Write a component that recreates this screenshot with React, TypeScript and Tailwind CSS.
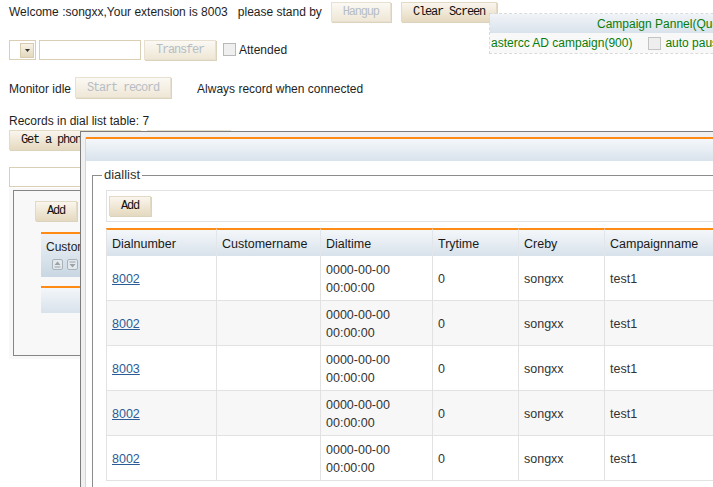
import clsx from 'clsx';
import type { ReactNode } from 'react';

interface BtnProps {
  children: ReactNode;
  disabled?: boolean;
  className?: string;
}

function Btn({ children, disabled, className }: BtnProps) {
  return (
    <button
      type="button"
      className={clsx(
        "h-[20px] shrink-0 whitespace-nowrap border px-[11px] font-['Liberation_Mono',monospace] text-[12px] leading-none tracking-[-1.2px] shadow-[1px_1px_0_#ddd3bc]",
        disabled
          ? 'border-[#e8e1d2] bg-linear-to-b from-[#fbf9f4] to-[#efe7d6] text-[#b5bdc6]'
          : 'border-[#e3dac6] bg-linear-to-b from-[#faf6ee] to-[#e6dac0] text-[#111]',
        className,
      )}
    >
      {children}
    </button>
  );
}

function SortIcon({ down }: { down?: boolean }) {
  return (
    <svg width="11" height="11" viewBox="0 0 11 11" aria-hidden="true">
      <rect x="0.5" y="0.5" width="10" height="10" rx="1.5" fill="#e4e9ee" stroke="#a9b1b9" />
      {down ? (
        <>
          <rect x="2.5" y="2.5" width="6" height="1" fill="#9aa2aa" />
          <path d="M2.5 5h6l-3 3.5z" fill="#9aa2aa" />
        </>
      ) : (
        <>
          <path d="M2.5 6h6l-3-3.5z" fill="#9aa2aa" />
          <rect x="2.5" y="7.5" width="6" height="1" fill="#9aa2aa" />
        </>
      )}
    </svg>
  );
}

const rows = [
  { num: '8002', by: 'songxx', camp: 'test1' },
  { num: '8002', by: 'songxx', camp: 'test1' },
  { num: '8003', by: 'songxx', camp: 'test1' },
  { num: '8002', by: 'songxx', camp: 'test1' },
  { num: '8002', by: 'songxx', camp: 'test1' },
];

const headers = ['Dialnumber', 'Customername', 'Dialtime', 'Trytime', 'Creby', 'Campaignname'];
const colWidths = ['w-[111px]', 'w-[104px]', 'w-[112px]', 'w-[86px]', 'w-[86px]', 'w-[221px]'];

function DialDialog() {
  return (
    <div className="absolute left-[80px] top-[131px] h-[420px] w-[760px] border-l border-t border-[#7d7d7d] bg-[#f0f0f0] pl-[4px] pt-[5px]">
      <div className="h-full border-l border-[#d6d6d6] bg-white">
        <div className="h-[24px] border-t-2 border-[#ff8a14] bg-linear-to-b from-[#f4f7fa] to-[#d9e3ec]" />
        <fieldset className="ml-[6px] mt-[6px] w-[700px] border border-[#8c8c8c] pb-[20px] pl-[13px] pt-[7px]">
          <legend className="-ml-[4px] px-[2px] text-[13px] leading-[16px] text-[#333]">diallist</legend>
          <div className="h-[32px] border border-[#e2e2e2] pl-[2px] pt-[5px]">
            <Btn>Add</Btn>
          </div>
          <table className="mt-[6px] w-[720px] table-fixed border-separate border-spacing-0 text-[12.5px] text-[#333]">
            <colgroup>
              {colWidths.map((w, i) => (
                <col key={i} className={w} />
              ))}
            </colgroup>
            <thead>
              <tr>
                {headers.map((h, i) => (
                  <th
                    key={h}
                    className={clsx(
                      'h-[28px] border-r border-t-2 border-r-[#e2e6ea] border-t-[#ff8a14] bg-linear-to-b from-[#f4f7fa] to-[#d8e2eb] pl-[5px] pt-[3px] text-left font-normal text-[#1a1a1a]',
                      i === 0 && 'border-l border-l-[#e2e2e2]',
                    )}
                  >
                    {h}
                  </th>
                ))}
              </tr>
            </thead>
            <tbody>
              {rows.map((r, i) => (
                <tr key={i} className={i % 2 === 1 ? 'bg-[#f7f7f7]' : 'bg-white'}>
                  <td className="h-[45px] border-b border-l border-r border-[#e2e2e2] pl-[5px] pt-[3px]">
                    <a href="#" className="text-[#2b5c96] underline">
                      {r.num}
                    </a>
                  </td>
                  <td className="border-b border-r border-[#e2e2e2]" />
                  <td className="border-b border-r border-[#e2e2e2] pl-[5px] pt-[2px] leading-[18px]">
                    0000-00-00
                    <br />
                    00:00:00
                  </td>
                  <td className="border-b border-r border-[#e2e2e2] pl-[5px] pt-[3px]">0</td>
                  <td className="border-b border-r border-[#e2e2e2] pl-[5px] pt-[3px]">{r.by}</td>
                  <td className="border-b border-r border-[#e2e2e2] pl-[5px] pt-[3px]">{r.camp}</td>
                </tr>
              ))}
            </tbody>
          </table>
        </fieldset>
      </div>
    </div>
  );
}

function CampaignPanel() {
  return (
    <div className="absolute left-[489px] top-[13px] w-[300px] border border-dashed border-[#dadada] text-[12px] text-[#0a7d0a]">
      <div className="flex h-[19px] items-center bg-linear-to-b from-[#f1f4f8] to-[#d9e2eb] pl-[107px] whitespace-nowrap">
        Campaign Pannel(Queue)
      </div>
      <div className="flex h-[20px] items-center bg-[#f8f8f8] pl-[1px] whitespace-nowrap">
        <span>astercc AD campaign(900)</span>
        <span className="ml-[16px] h-[13px] w-[13px] border border-[#c4c4c4] bg-[#eeeeee]" />
        <span className="ml-[4px]">auto pause</span>
      </div>
    </div>
  );
}

export default function App() {
  return (
    <div className="relative h-[487px] w-[713px] overflow-hidden bg-white font-['Liberation_Sans',Arial,sans-serif] text-[12px] text-[#1e1e1e]">
      <div className="pl-[9px]">
        <div className="mt-[2px] flex h-[20px] items-center whitespace-nowrap">
          <span>Welcome :songxx,Your extension is 8003</span>
          <span className="ml-[10px]">please stand by</span>
          <Btn disabled className="ml-[9px]">
            Hangup
          </Btn>
          <Btn className="ml-[10px]">Clear Screen</Btn>
        </div>

        <div className="mt-[18px] flex h-[20px] items-center whitespace-nowrap">
          <div className="flex h-[20px] w-[27px] items-center justify-end border border-[#dacfb2] bg-white pr-[1px]">
            <div className="flex h-[15px] w-[14px] items-center justify-center border border-[#d8ccae] bg-linear-to-b from-[#f7f2e6] to-[#e4d8bd]">
              <svg width="5" height="3" viewBox="0 0 5 3" aria-hidden="true">
                <path d="M0 0h5L2.5 3z" fill="#333" />
              </svg>
            </div>
          </div>
          <input className="ml-[3px] h-[20px] w-[102px] border border-[#dacfb2] bg-white outline-none" />
          <Btn disabled className="ml-[3px]">
            Transfer
          </Btn>
          <span className="ml-[7px] h-[13px] w-[13px] -translate-y-[1px] border border-[#b9b9b9] bg-[#efefef]" />
          <span className="ml-[3px]">Attended</span>
        </div>

        <div className="mt-[17px] flex h-[21px] items-center whitespace-nowrap">
          <span className="translate-y-[1px]">Monitor idle</span>
          <Btn disabled className="ml-[4px] h-[21px]">
            Start record
          </Btn>
          <span className="ml-[26px] translate-y-[1px]">Always record when connected</span>
        </div>

        <div className="mt-[15px] h-[16px] leading-[16px]">Records in dial list table: 7</div>

        <div className="mt-[1px] flex">
          <Btn>Get a phone number</Btn>
          <Btn disabled className="ml-[6px] w-[84px]">
            Dial list
          </Btn>
        </div>

        <input className="mt-[17px] block h-[20px] w-[240px] border border-[#dacfb2] bg-white outline-none" />

        <div className="mt-[1px] w-[620px] bg-[#f8f8f8] px-[4px] pb-[3px] pt-[2px]">
          <div className="h-[166px] border border-[#858585] pt-[10px]">
            <Btn className="ml-[21px]">Add</Btn>
            <div className="ml-[27px] mt-[11px] h-[45px] border-t-2 border-[#ff8a14] bg-linear-to-b from-[#eef2f6] to-[#c8d7e3] pl-[5px] pt-[5px]">
              <div className="w-[34px] overflow-hidden whitespace-nowrap leading-[16px] text-[#222]">Customername</div>
              <div className="ml-[6px] mt-[4px] flex gap-[4px]">
                <SortIcon />
                <SortIcon down />
              </div>
            </div>
            <div className="ml-[27px] mt-[9px] h-[27px] border-t-2 border-[#ff8a14] bg-linear-to-b from-[#f3f6f9] to-[#d8e2eb]" />
          </div>
        </div>
      </div>

      <CampaignPanel />
      <DialDialog />
    </div>
  );
}
